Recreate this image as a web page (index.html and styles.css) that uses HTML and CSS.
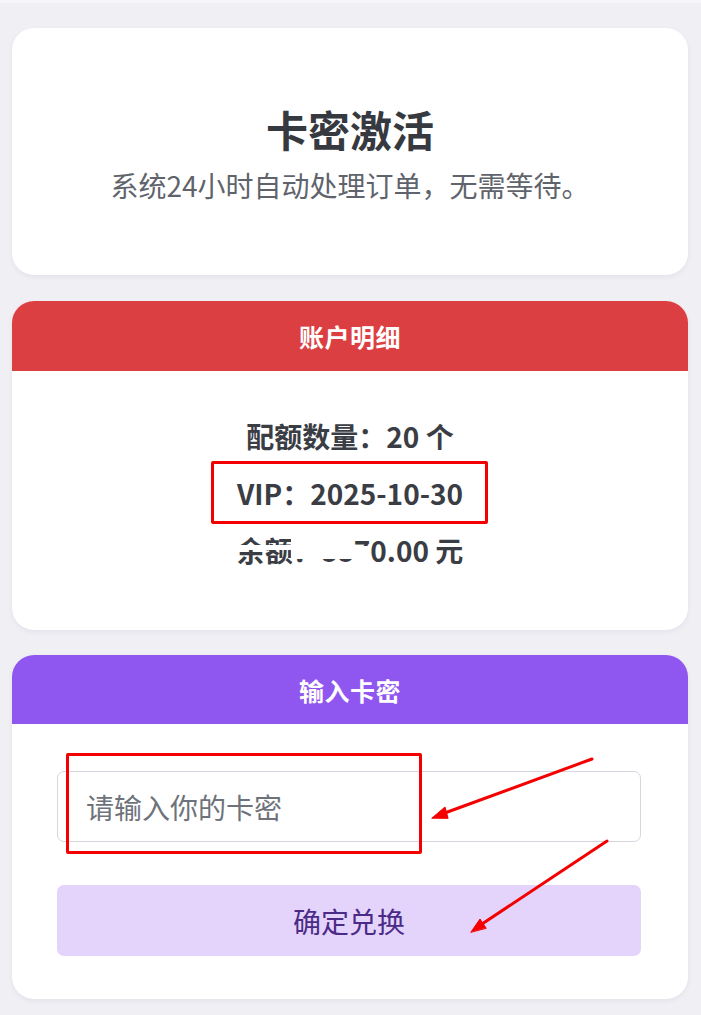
FILE: index.html
```html
<!DOCTYPE html>
<html lang="zh-CN">
<head>
<meta charset="utf-8">
<title>卡密激活</title>
<link rel="stylesheet" href="styles.css">
</head>
<body>
<div class="page">
  <section class="card hero">
    <h1 class="hero-title">卡密激活</h1>
    <p class="hero-sub">系统24小时自动处理订单，无需等待。</p>
  </section>

  <section class="card">
    <div class="card-head head-red">账户明细</div>
    <div class="info">
      <div class="info-row">配额数量：20 个</div>
      <div class="info-row">VIP：2025-10-30</div>
      <div class="info-row"><span class="cut-top">余额</span><span class="hide">：88</span><span class="hide-low">7</span>0.00 元</div>
    </div>
  </section>

  <section class="card">
    <div class="card-head head-purple">输入卡密</div>
    <div class="form">
      <input class="code-input" type="text" placeholder="请输入你的卡密">
      <button class="submit" type="button">确定兑换</button>
    </div>
  </section>

  <div class="mark mark-vip"></div>
  <div class="mark mark-input"></div>
  <svg class="overlay" width="701" height="1015" viewBox="0 0 701 1015">
    <g stroke="#f40000" stroke-width="3" stroke-linecap="round" fill="#f40000">
      <line x1="592" y1="759" x2="442" y2="814"/>
      <polygon points="432,818 445,807 448,818" stroke-width="1"/>
      <line x1="607" y1="841" x2="479" y2="926"/>
      <polygon points="471,932 480,919 486,928" stroke-width="1"/>
    </g>
  </svg>
</div>
</body>
</html>
```

FILE: styles.css
```css
* { box-sizing: border-box; }

html, body {
  margin: 0;
  padding: 0;
}

body {
  background: linear-gradient(#f6f6f8 0 3px, #efeff4 3px);
  font-family: "Noto Sans CJK SC", "Noto Sans", sans-serif;
  color: #3a3d44;
}

.page {
  position: relative;
  width: 701px;
  min-height: 1015px;
  padding: 28px 13px 12px 12px;
  display: flex;
  flex-direction: column;
  gap: 25px;
}

.card {
  background: #fff;
  border-radius: 22px;
  overflow: hidden;
  box-shadow: 0 2px 5px rgba(30, 30, 60, 0.06);
}

.hero {
  height: 247px;
  margin-bottom: 1px;
  display: flex;
  flex-direction: column;
  align-items: center;
  justify-content: center;
  gap: 12px;
  padding-top: 2px;
}

.hero-title {
  margin: 0;
  font-size: 42px;
  font-weight: 700;
  line-height: 52px;
  color: #363a40;
}

.hero-sub {
  margin: 0;
  font-size: 28px;
  line-height: 36px;
  color: #5f646c;
}

.card-head {
  height: 70px;
  display: flex;
  align-items: center;
  justify-content: center;
  color: #fff;
  font-size: 25px;
  font-weight: 700;
  letter-spacing: 0.5px;
}

.head-red { background: #dc3f42; }
.head-purple { background: #8f56f0; height: 69px; }

.info {
  padding: 37px 0 51px;
  display: flex;
  flex-direction: column;
  align-items: center;
}

.info-row {
  font-size: 28px;
  font-weight: 700;
  line-height: 57px;
  color: #3a3d44;
}

.cut-top,
.hide,
.hide-low {
  position: relative;
}

.cut-top::after {
  content: "";
  position: absolute;
  left: 0;
  right: 0;
  top: 15px;
  height: 5px;
  background: #fff;
}

.hide::after {
  content: "";
  position: absolute;
  left: -2px;
  right: 0;
  top: 0;
  bottom: 11px;
  background: #fff;
}

.hide-low::after {
  content: "";
  position: absolute;
  left: -1px;
  right: 3px;
  top: 16px;
  bottom: 0;
  background: #fff;
}

.form {
  padding: 47px 47px 43px 45px;
  display: flex;
  flex-direction: column;
  gap: 43px;
}

.code-input {
  height: 71px;
  width: 100%;
  border: 1px solid #d6d6de;
  border-radius: 7px;
  padding: 0 28px;
  font-family: inherit;
  font-size: 28px;
  color: #333;
  background: #fff;
  outline: none;
}

.code-input::placeholder {
  color: #6e737b;
}

.submit {
  height: 71px;
  width: 100%;
  border: none;
  border-radius: 7px;
  background: #e4d4fb;
  color: #4b2a88;
  font-family: inherit;
  font-size: 28px;
}

.mark {
  position: absolute;
  border: 3px solid #f40000;
  border-radius: 2px;
  pointer-events: none;
}

.mark-vip {
  left: 211px;
  top: 461px;
  width: 277px;
  height: 63px;
}

.mark-input {
  left: 66px;
  top: 753px;
  width: 356px;
  height: 101px;
}

.overlay {
  position: absolute;
  left: 0;
  top: 0;
  pointer-events: none;
}
```
